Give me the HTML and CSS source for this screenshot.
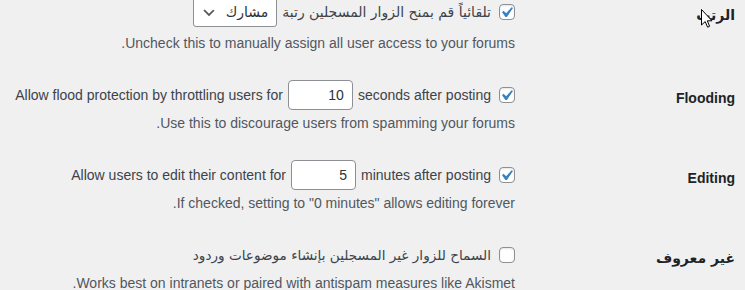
FILE: index.html
```html
<!DOCTYPE html>
<html lang="ar" dir="rtl">
<head>
<meta charset="utf-8">
<title>إعدادات المنتديات</title>
<link rel="stylesheet" href="styles.css">
</head>
<body>
<div class="wrap">
  <table class="form-table">
    <tbody>
      <tr class="row row--first">
        <th scope="row" class="label label--ar">الرتب</th>
        <td class="field">
          <div class="line">
            <span class="cb is-checked"><svg viewBox="0 0 20 20" width="21" height="21"><path d="M14.83 4.89l1.34.94-5.81 8.38H9.02L5.78 9.67l1.34-1.25 2.57 2.4z" fill="#3582c4"/></svg></span>
            <span class="text text--ar">تلقائياً قم بمنح الزوار المسجلين رتبة</span>
            <span class="select-wrap">
              <select class="select"><option>مشارك</option></select>
              <svg class="chevron" viewBox="0 0 20 20" width="16" height="16"><path d="M5 6l5 5 5-5 2 1-7 7-7-7 1-1z" fill="#555"/></svg>
            </span>
          </div>
          <p class="description description--spaced">Uncheck this to manually assign all user access to your forums.</p>
        </td>
      </tr>
      <tr class="row">
        <th scope="row" class="label">Flooding</th>
        <td class="field">
          <div class="line">
            <span class="cb is-checked"><svg viewBox="0 0 20 20" width="21" height="21"><path d="M14.83 4.89l1.34.94-5.81 8.38H9.02L5.78 9.67l1.34-1.25 2.57 2.4z" fill="#3582c4"/></svg></span>
            <span class="text">seconds after posting</span>
            <input class="num" type="text" value="10">
            <span class="text">Allow flood protection by throttling users for</span>
          </div>
          <p class="description">Use this to discourage users from spamming your forums.</p>
        </td>
      </tr>
      <tr class="row">
        <th scope="row" class="label">Editing</th>
        <td class="field">
          <div class="line">
            <span class="cb is-checked"><svg viewBox="0 0 20 20" width="21" height="21"><path d="M14.83 4.89l1.34.94-5.81 8.38H9.02L5.78 9.67l1.34-1.25 2.57 2.4z" fill="#3582c4"/></svg></span>
            <span class="text">minutes after posting</span>
            <input class="num" type="text" value="5">
            <span class="text">Allow users to edit their content for</span>
          </div>
          <p class="description">If checked, setting to "0 minutes" allows editing forever.</p>
        </td>
      </tr>
      <tr class="row">
        <th scope="row" class="label label--ar">غير معروف</th>
        <td class="field">
          <div class="line">
            <span class="cb"></span>
            <span class="text text--ar text--ar-long">السماح للزوار غير المسجلين بإنشاء موضوعات وردود</span>
          </div>
          <p class="description">Works best on intranets or paired with antispam measures like Akismet.</p>
        </td>
      </tr>
    </tbody>
  </table>
</div>
<svg class="cursor" viewBox="0 0 12 19" width="12" height="19"><path d="M0.5 0.5 L0.5 16 L4.2 12.6 L6.6 18.2 L8.6 17.3 L6.3 11.8 L11 11.8 Z" fill="#fff" stroke="#000" stroke-width="1" stroke-linejoin="round"/></svg>
</body>
</html>
```

FILE: styles.css
```css
html {
  overflow: hidden;
}

html, body {
  margin: 0;
  padding: 0;
  background: #f0f0f1;
}

body {
  direction: rtl;
  font-family: "Liberation Sans", "DejaVu Sans", Arial, sans-serif;
  font-size: 14px;
  color: #3c434a;
  overflow: hidden;
  position: relative;
  height: 290px;
}

.wrap {
  margin-top: -18px;
  padding-right: 10px;
}

.form-table {
  width: 100%;
  border-collapse: collapse;
  border-spacing: 0;
}

.row {
  vertical-align: top;
}

.label {
  width: 200px;
  padding: 24px 0 0 10px;
  text-align: right;
  font-weight: bold;
  color: #1d2327;
  line-height: 18px;
  font-size: 14px;
}

.label--ar {
  font-family: "DejaVu Sans", sans-serif;
  font-size: 14px;
}

.field {
  padding: 15px 10px 13px;
  text-align: right;
}

.line {
  display: flex;
  flex-direction: row;
  align-items: center;
  gap: 5px;
  height: 30px;
}

.text {
  white-space: nowrap;
  line-height: 18px;
}

.text--ar {
  font-family: "DejaVu Sans", sans-serif;
  font-size: 14px;
}

.text--ar-long {
  font-size: 13.6px;
}

.cb {
  box-sizing: border-box;
  width: 16px;
  height: 16px;
  flex: none;
  border: 1px solid #8c8f94;
  border-radius: 4px;
  background: #fff;
  box-shadow: inset 0 1px 2px rgba(0, 0, 0, 0.1);
  margin-left: 3px;
  overflow: visible;
  direction: ltr;
}

.cb svg {
  display: block;
  margin: -3px 0 0 -4px;
}

.num {
  box-sizing: border-box;
  width: 65px;
  height: 30px;
  flex: none;
  margin: 0;
  padding: 0 8px;
  border: 1px solid #8c8f94;
  border-radius: 4px;
  background: #fff;
  font-family: "Liberation Sans", Arial, sans-serif;
  font-size: 14px;
  color: #2c3338;
  direction: ltr;
  text-align: right;
  outline: none;
}

.select-wrap {
  position: relative;
  display: block;
  flex: none;
  width: 84px;
  height: 30px;
}

.select {
  box-sizing: border-box;
  -webkit-appearance: none;
  appearance: none;
  display: block;
  width: 84px;
  height: 30px;
  margin: 0;
  padding: 0 8px 0 24px;
  border: 1px solid #8c8f94;
  border-radius: 3px;
  background: #fff;
  font-family: "DejaVu Sans", sans-serif;
  font-size: 14px;
  color: #2c3338;
  direction: rtl;
  outline: none;
}

.chevron {
  position: absolute;
  left: 8px;
  top: 8px;
}

.description {
  margin: 4px 0 0;
  line-height: 18px;
  color: #50575e;
  font-size: 14px;
}

.description--spaced {
  margin-top: 7px;
}

.cursor {
  position: absolute;
  left: 701px;
  top: 9px;
}
```
